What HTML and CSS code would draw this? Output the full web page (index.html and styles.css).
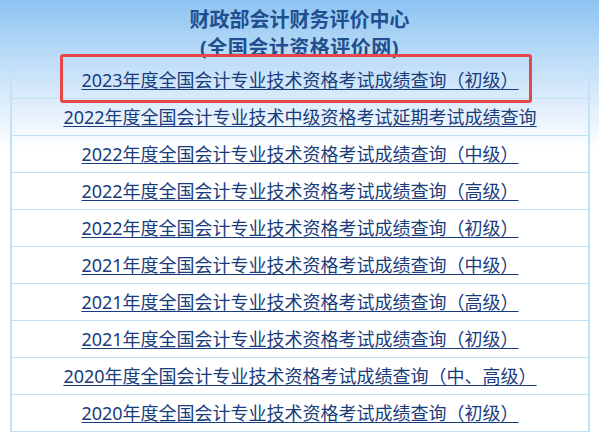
FILE: index.html
```html
<!DOCTYPE html>
<html lang="zh-CN">
<head>
<meta charset="utf-8">
<title>财政部会计财务评价中心</title>
<link rel="stylesheet" href="styles.css">
</head>
<body>
<div class="page">
  <header class="head">
    <div class="title">财政部会计财务评价中心</div>
    <div class="title sub">(全国会计资格评价网)</div>
  </header>
  <ul class="list">
    <li class="row"><a href="#">2023年度全国会计专业技术资格考试成绩查询（初级）</a></li>
    <li class="row"><a href="#">2022年度全国会计专业技术中级资格考试延期考试成绩查询</a></li>
    <li class="row"><a href="#">2022年度全国会计专业技术资格考试成绩查询（中级）</a></li>
    <li class="row"><a href="#">2022年度全国会计专业技术资格考试成绩查询（高级）</a></li>
    <li class="row"><a href="#">2022年度全国会计专业技术资格考试成绩查询（初级）</a></li>
    <li class="row"><a href="#">2021年度全国会计专业技术资格考试成绩查询（中级）</a></li>
    <li class="row"><a href="#">2021年度全国会计专业技术资格考试成绩查询（高级）</a></li>
    <li class="row"><a href="#">2021年度全国会计专业技术资格考试成绩查询（初级）</a></li>
    <li class="row"><a href="#">2020年度全国会计专业技术资格考试成绩查询（中、高级）</a></li>
    <li class="row"><a href="#">2020年度全国会计专业技术资格考试成绩查询（初级）</a></li>
  </ul>
  <div class="highlight"></div>
</div>
</body>
</html>
```

FILE: styles.css
```css
html, body {
  margin: 0;
  padding: 0;
}
body {
  width: 599px;
  height: 436px;
  overflow: hidden;
  background: linear-gradient(to bottom, #8dc3f2 0px, #b6d9f7 50px, #dcecfb 100px, #ffffff 150px);
  font-family: "Noto Sans", "Noto Sans CJK SC", sans-serif;
}
.page {
  position: relative;
}
.head {
  padding-top: 6px;
  text-align: center;
}
.title {
  font-size: 20px;
  line-height: 28px;
  font-weight: bold;
  color: #1f4f8e;
}
.title.sub {
  letter-spacing: 0.5px;
}
.list {
  list-style: none;
  margin: 0 9px 0 10px;
  padding: 0;
  border-left: 2px solid #c4e2f6;
  border-right: 2px solid #c4e2f6;
}
.row {
  height: 36px;
  border-bottom: 1px solid #bfe0f5;
  display: flex;
  align-items: center;
  justify-content: center;
}
.row a {
  font-size: 18px;
  line-height: 22px;
  color: #183c7c;
  text-decoration: underline;
  text-underline-offset: 2px;
}
.highlight {
  position: absolute;
  left: 60px;
  top: 54px;
  width: 466px;
  height: 43px;
  border: 3px solid #e8474a;
  border-radius: 3px;
}
```
